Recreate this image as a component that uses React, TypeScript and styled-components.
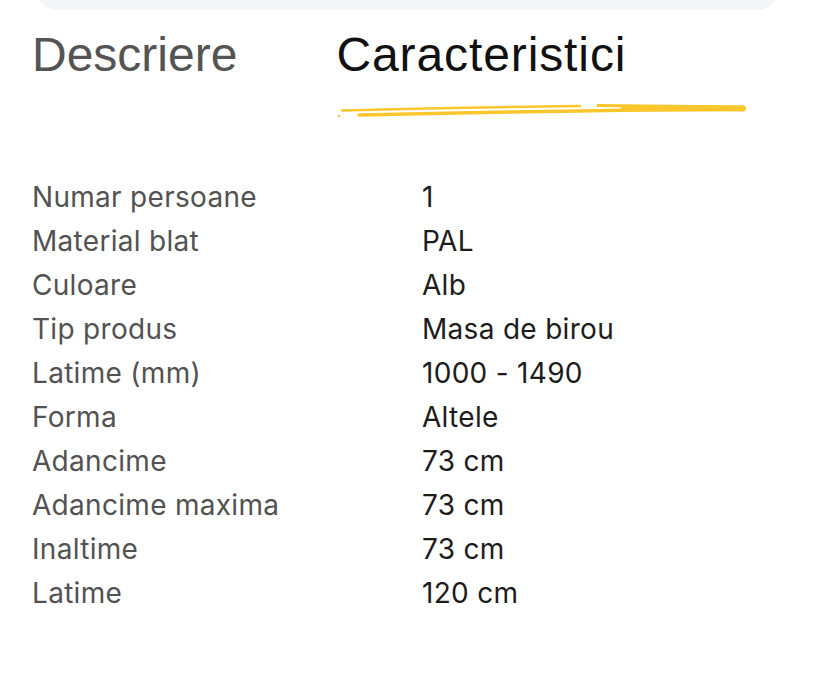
import React from "react";
import styled, { createGlobalStyle } from "styled-components";

const Global = createGlobalStyle`
  html, body { margin: 0; padding: 0; background: #ffffff; }
  body { width: 815px; height: 700px; overflow: hidden; }
`;

const Page = styled.div`
  width: 815px;
  height: 700px;
  background: #fff;
  display: flex;
  flex-direction: column;
`;

const TopCard = styled.div`
  margin: -30px 37px 0 37px;
  height: 40px;
  background: #f3f5f7;
  border-radius: 0 0 20px 20px;
`;

const Tabs = styled.div`
  display: flex;
  padding: 15px 0 0 32px;
  gap: 99px;
`;

const Tab = styled.div<{ $active?: boolean }>`
  display: flex;
  flex-direction: column;
  font-family: "Liberation Sans", Arial, sans-serif;
  font-size: 48px;
  line-height: 60px;
  letter-spacing: ${(p) => (p.$active ? "0.9px" : "0")};
  color: ${(p) => (p.$active ? "#111111" : "#545454")};
`;

const Brush = styled.svg`
  display: block;
  margin: 13px 0 0 -2px;
`;

const Table = styled.div`
  display: grid;
  grid-template-columns: 390px 1fr;
  grid-auto-rows: 44px;
  padding: 55px 0 0 32px;
  font-family: Inter, "Noto Sans", sans-serif;
  font-size: 28px;
  letter-spacing: 0.3px;
  align-items: center;
`;

const Label = styled.div`
  color: #525252;
`;

const Value = styled.div`
  color: #1c1c1c;
`;

const rows: [string, string][] = [
  ["Numar persoane", "1"],
  ["Material blat", "PAL"],
  ["Culoare", "Alb"],
  ["Tip produs", "Masa de birou"],
  ["Latime (mm)", "1000 - 1490"],
  ["Forma", "Altele"],
  ["Adancime", "73 cm"],
  ["Adancime maxima", "73 cm"],
  ["Inaltime", "73 cm"],
  ["Latime", "120 cm"],
];

const Y = "#f9c62c";

export default function App() {
  return (
    <Page>
      <Global />
      <TopCard />
      <Tabs>
        <Tab>Descriere</Tab>
        <Tab $active>
          Caracteristici
          <Brush width="416" height="22" viewBox="0 0 416 22">
            <circle cx="5" cy="18" r="1.2" fill={Y} />
            <path d="M8 12.5 Q 130 9.5 246 8" stroke={Y} strokeWidth="2.6" fill="none" strokeLinecap="round" />
            <path d="M264 7.5 L 408 9" stroke={Y} strokeWidth="3" fill="none" strokeLinecap="round" />
            <path d="M25 17 Q 200 13 408 11" stroke={Y} strokeWidth="3.4" fill="none" strokeLinecap="round" />
            <path d="M290 10 L 409 10.5" stroke={Y} strokeWidth="6" fill="none" strokeLinecap="round" />
          </Brush>
        </Tab>
      </Tabs>
      <Table>
        {rows.map(([l, v]) => (
          <React.Fragment key={l}>
            <Label>{l}</Label>
            <Value>{v}</Value>
          </React.Fragment>
        ))}
      </Table>
    </Page>
  );
}
